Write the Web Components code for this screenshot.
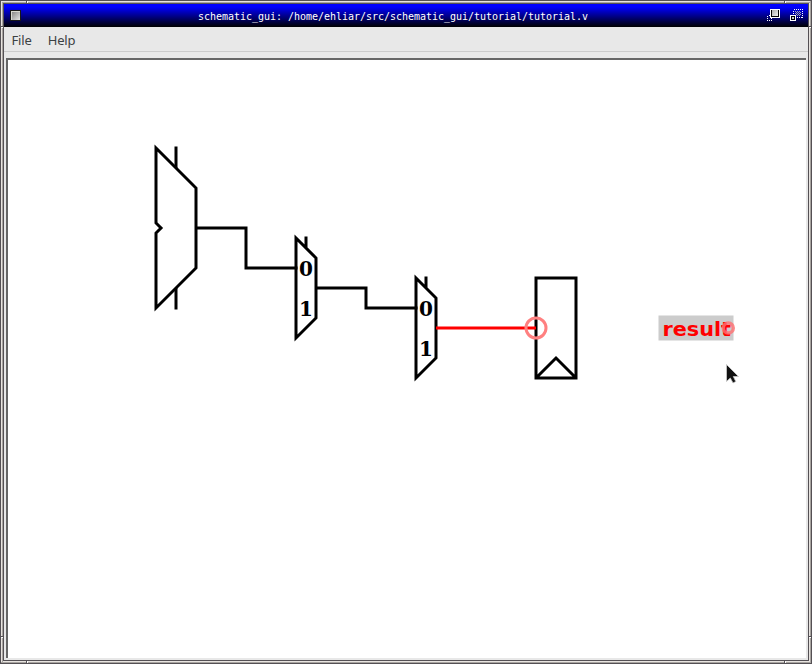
<!DOCTYPE html>
<html lang="en">
<head>
<meta charset="utf-8">
<title>schematic_gui</title>
<style>html,body{margin:0;height:100%;overflow:hidden}</style>
</head>
<body>
<app-window>
  <title-bar slot="title">schematic_gui: /home/ehliar/src/schematic_gui/tutorial/tutorial.v</title-bar>
  <menu-bar slot="menu"><menu-item>File</menu-item><menu-item>Help</menu-item></menu-bar>
  <schematic-canvas></schematic-canvas>
</app-window>
<script>
const define = (name, html) => customElements.define(name, class extends HTMLElement {
  constructor() {
    super();
    this.attachShadow({ mode: "open" }).innerHTML = html;
  }
});

define("app-window", `
<style>
:host{display:flex;flex-direction:column;box-sizing:border-box;position:relative;width:812px;height:664px;padding:4px;background:#e8e8e8}
.frame{position:absolute;left:0;top:0}
main{flex:1;min-height:0;box-sizing:border-box;padding:6px 2px 2px 2px;display:flex}
::slotted(schematic-canvas){flex:1}
</style>
<svg class="frame" width="812" height="664" shape-rendering="crispEdges" fill="none">
  <path stroke="#545054" d="M0 .5H812M.5 0V664M0 663.5H812M811.5 0V664"/>
  <path stroke="#e8e4e0" d="M1 1.5H811M1.5 1V663M4 661.5H809M809.5 4V662"/>
  <path stroke="#a8a4a0" d="M2 2.5H810M2.5 2V662M1 662.5H811M810.5 1V663"/>
  <path stroke="#545054" d="M3 3.5H809M3.5 3V661M3 660.5H809M808.5 3V661"/>
  <path stroke="#545054" d="M26.5 1V3M784.5 1V3M26.5 661V663M784.5 661V663M1 26.5H3M809 26.5H811M1 636.5H3M809 636.5H811"/>
  <path stroke="#fff" d="M27.5 1V3M785.5 1V3M27.5 661V663M785.5 661V663M1 27.5H3M809 27.5H811M1 637.5H3M809 637.5H811"/>
</svg>
<slot name="title"></slot><slot name="menu"></slot><main><slot></slot></main>`);

define("title-bar", `
<style>
:host{display:grid;grid-template-columns:194px 1fr 220px;align-items:center;height:23px;flex:none;background:linear-gradient(#00f,#00f 12%,#000);color:#fff;font:10px/23px "DejaVu Sans Mono",monospace}
span{white-space:pre;padding-top:2px;line-height:21px;letter-spacing:-.02px}
svg{display:block}.r{justify-self:end}
</style>
<svg width="40" height="23" shape-rendering="crispEdges">
  <defs><linearGradient id="g" x2="1" y2="1"><stop stop-color="#888"/><stop offset="1" stop-color="#e4e4e4"/></linearGradient></defs>
  <rect x="6" y="6" width="11" height="11" fill="#181818"/><rect x="7" y="7" width="9" height="9" fill="#d8d8d0"/><rect x="8" y="8" width="8" height="8" fill="url(#g)"/>
</svg>
<span><slot></slot></span>
<svg class="r" width="44" height="23" shape-rendering="crispEdges">
  <defs><linearGradient id="h" x2="1" y2="1"><stop stop-color="#aaa"/><stop offset="1" stop-color="#f0f0f0"/></linearGradient></defs>
  <path fill="#fff" d="M5 11h1v1h-1zM3 12h1v1h-1zM3 14h1v1h-1zM3 16h1v1h-1zM5 16h1v1h-1zM7 16h1v1h-1zM7 14h1v1h-1z"/>
  <rect x="6" y="5" width="10" height="9" fill="#fff"/><rect x="7" y="6" width="8" height="7" fill="#000"/><rect x="8" y="6" width="6" height="6" fill="url(#h)"/>
  <rect x="29.5" y="5.5" width="9" height="8" fill="none" stroke="#fff" stroke-dasharray="1 1"/>
  <path stroke="#aaa" stroke-dasharray="1 1" d="M31 7.5H37M32 8.5H38M31 9.5H37M32 10.5H38M31 11.5H37"/>
  <rect x="26" y="11" width="6" height="6" fill="#fff"/><rect x="27" y="12" width="4" height="4" fill="#000"/><rect x="28" y="13" width="2" height="2" fill="#ccc"/>
</svg>`);

define("menu-bar", `
<style>:host{display:flex;gap:16px;box-sizing:border-box;height:25px;flex:none;padding:0 7.5px;border-bottom:1px solid #cbcbcb;color:#3c4143;font:13px/27px "Noto Sans",sans-serif;letter-spacing:-.15px}</style><slot></slot>`);
define("menu-item", `<style>:host{display:block}</style><slot></slot>`);

define("schematic-canvas", `
<style>
:host{display:block;box-sizing:border-box;border-top:2px solid #666;border-left:2px solid #666;background:#fff;overflow:hidden}
svg{display:block}
.n{font:bold 20px "DejaVu Serif",serif;text-anchor:middle}
.r{font:bold 20px "DejaVu Sans",sans-serif;fill:red}
.w{fill:none;stroke:#000;stroke-width:3}
</style>
<svg width="798" height="598" viewBox="8 60 798 598">
  <g class="w">
    <path d="M156 148L196 188V268L156 308V233L161 228L156 223Z"/>
    <path d="M176 146.500V168M176 288V309.500M196 228H246V268H297.500"/>
    <path d="M296 238L316 258V318L296 338ZM306 236.500V248M316 288H366V308H417.500"/>
    <path d="M416 278L436 298V358L416 378ZM426 276.500V288"/>
    <path d="M536 278H576V378H536ZM536 378L556 358L576 378"/>
  </g>
  <text class="n" x="306" y="276">0</text><text class="n" x="306" y="316">1</text>
  <text class="n" x="426" y="316">0</text><text class="n" x="426" y="356">1</text>
  <path d="M436 328H536" stroke="red" stroke-width="3"/>
  <circle cx="536" cy="328" r="10" fill="none" stroke="#ff8080" stroke-width="3"/>
  <rect x="658.500" y="315.500" width="75" height="25" fill="#ccc"/>
  <text class="r" x="662.500" y="336" textLength="68.500" lengthAdjust="spacingAndGlyphs">result</text>
  <circle cx="728.300" cy="328" r="5" fill="none" stroke="#ff7070" stroke-opacity=".8" stroke-width="3.500"/>
  <path d="M726.500 364.500V381.500L730.300 378L733 383L735.800 381.500L733.300 376.500H738.500Z" fill="#111" stroke="#ccc" stroke-width=".8"/>
</svg>`);
</script>
</body>
</html>
